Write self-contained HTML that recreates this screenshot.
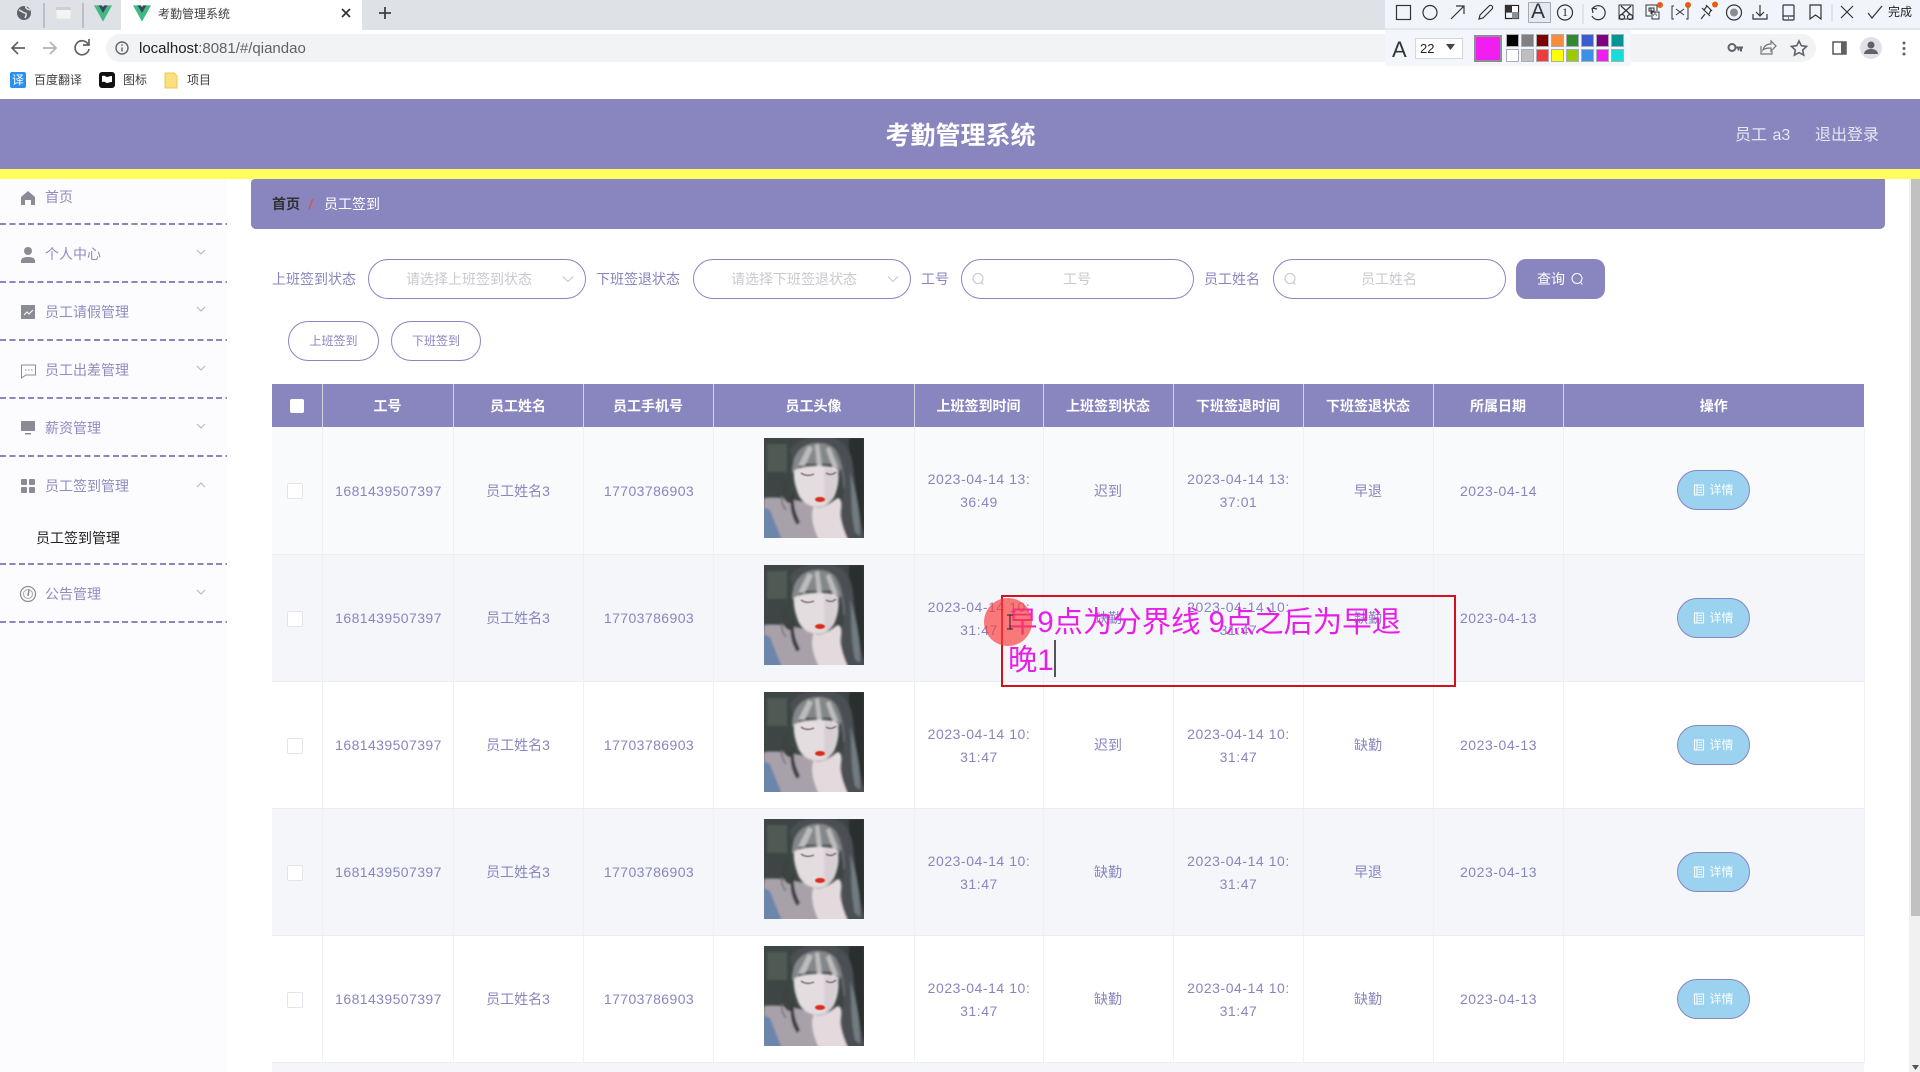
<!DOCTYPE html>
<html lang="zh-CN"><head><meta charset="utf-8"><title>考勤管理系统</title>
<style>
html,body{margin:0;padding:0;width:1920px;height:1072px;overflow:hidden;background:#fff}
body{position:relative;font-family:"Liberation Sans","Noto Sans CJK SC",sans-serif;font-size:14px;color:#8985bf}
.a{position:absolute;white-space:nowrap}
.m{position:absolute;left:45px;line-height:20px;color:#8f8cc0}
.d{position:absolute;left:0;width:227px;height:2px;background:repeating-linear-gradient(90deg,#8985bf 0 6px,transparent 6px 9.4px)}
.pill{position:absolute;top:259px;height:38px;border:1px solid #8985bf;border-radius:20px;background:#fff}
.ph{position:absolute;top:269px;line-height:20px;color:#c9c9cf;white-space:nowrap}
.lb{position:absolute;top:269px;line-height:20px;color:#8985bf;white-space:nowrap}
table{position:absolute;left:272px;top:384px;width:1592px;border-collapse:collapse;table-layout:fixed}
th{height:43px;padding:0;background:#8985bf;color:#fff;font-weight:700;border-right:1px solid #d4d3e8;font-size:14px;box-sizing:border-box}
th:last-child{border-right:none}
td{height:127px;padding:2px 0 0;text-align:center;vertical-align:middle;border-right:1px solid #eef0f5;border-bottom:1px solid #ebeef5;box-sizing:border-box;line-height:23px;color:#8985bf}
tr.r1 td{background:#f9fafc}
tr.r2 td{background:#f5f6fa}
tr.r3 td{background:#fff}
td.n{letter-spacing:.42px;padding-left:2px}
td.t{letter-spacing:.55px;padding-left:1px}
.cb{display:block;width:14px;height:14px;border:1px solid #e3e5ec;background:#fff;border-radius:2px;margin:0 0 0 15px}
.pic{display:block;width:100px;height:100px;margin:-7px auto 0}
.det{display:inline-block;position:relative;top:-1px;box-sizing:border-box;width:73px;height:40px;line-height:38px;border:1px solid #8985bf;border-radius:20px;background:#9bd2ef;color:#fff;font-size:12px;vertical-align:middle}
.det svg{vertical-align:-2px;margin-right:4px}
.sw{position:absolute;width:13px;height:13px;box-sizing:border-box;border:1px solid #a9adb5}
</style></head>
<body>
<svg width="0" height="0" style="position:absolute">
<defs>
<filter id="bl" x="-5%" y="-5%" width="110%" height="110%"><feGaussianBlur stdDeviation="1.1"/></filter>
<filter id="bs" x="-5%" y="-5%" width="110%" height="110%"><feGaussianBlur stdDeviation="0.5"/></filter>
<symbol id="girl" viewBox="0 0 100 100">
<rect width="100" height="100" fill="#3d4644"/>
<g filter="url(#bl)">
<rect x="3" y="6" width="20" height="28" fill="#505a55"/>
<rect x="85" y="0" width="15" height="100" fill="#2a2f2f"/>
<path d="M26 12C32 2 44-2 58-2c16 0 26 8 30 24 4 26 4 54 14 80H76L80 50 74 26H30z" fill="#4b5052"/>
<path d="M0 60C15 58 32 62 50 66L56 102H-2z" fill="#a9a1aa"/>
<path d="M-2 68L6 72 18 102H-2z" fill="#6c86ab"/>
<path d="M28 34C28 16 38 5 54 5c14 0 22 8 24 24l-4 6-6-9H36l-4 10z" fill="#84878a"/>
<path d="M34 28L44 8l5 2-8 18zM55 6l3 22-5 1-2-22zM66 9l8 20-5 2-7-20z" fill="#bdbcbb"/>
<path d="M30 33C36 27 64 26 73 31c3 7 1 19-3 28-4 6-8 9-14 10-10 0-17-4-21-11-3-7-6-17-5-25z" fill="#e4dde0"/>
<path d="M60 30c8 0 13 2 13 6 0 8-1 18-6 26-3 3-5 3-7 2z" fill="#d6d0d5"/>
<path d="M26 40C21 50 24 58 30 64 25 68 18 62 18 52c0-6 3-10 8-14z" fill="#3d4241"/>
<path d="M31 56c-3 10 1 20 5 28l-3 3C27 78 25 66 28 56z" fill="#3a3e3d"/>
<path d="M50 68C54 71 62 69 72 61c5-3 6 4 5 10-1 8 0 15 7 31H55C49 90 46 76 50 68z" fill="#e4dadd"/>
<path d="M86 34c2 18 0 38 5 60l5 4C97 78 92 52 86 34z" fill="#6f7b80"/>
<path d="M18 58c-1 6 1 10 4 14M72 14c6 10 8 22 8 36" stroke="#6a7072" stroke-width="1.500" fill="none"/>
</g>
<g filter="url(#bs)">
<path d="M37 35c4 3 9 3 13 1M62 35c3 2 7 2 10-1" stroke="#7b6d74" stroke-width="1.500" fill="none"/>
<ellipse cx="56" cy="61.500" rx="5" ry="2.500" fill="#db2a1e"/>
</g>
</symbol>
<symbol id="vue" viewBox="0 0 20 18"><path d="M0 0h7l3 5 3-5h7L10 18z" fill="#42b883"/><path d="M5 0h4l1 2 1-2h4l-5 8.5z" fill="#35495e"/></symbol>
<symbol id="doc" viewBox="0 0 12 12"><path d="M1.5 1h9v10h-9zM4 1v10M5.5 3.5h3.5M5.5 6h3.5M5.5 8.5h3.5" stroke="#fff" stroke-width="1.1" fill="none"/></symbol>
</defs>
</svg>

<!-- browser chrome -->
<div class="a" style="left:0;top:0;width:1920px;height:30px;background:#dee1e6"></div>
<div class="a" style="left:121px;top:0;width:241px;height:30px;background:#fff"></div>
<div class="a" style="left:106px;top:34px;width:1710px;height:28px;background:#f1f3f4;border-radius:14px"></div>
<svg class="a" style="left:0;top:0" width="420" height="98" viewBox="0 0 420 98">
<circle cx="24" cy="13" r="7" fill="#5f6368"/><path d="M19 10c3 1 4 3 6 3s1 3 0 5M26 6c-1 2 1 3 4 4" stroke="#dee1e6" stroke-width="1.6" fill="none"/>
<path d="M44 3v25M83 3v25" stroke="#9aa0a6"/>
<rect x="56" y="7" width="15" height="12" fill="#f4f4f4" stroke="#e2e2e2"/><rect x="56" y="7" width="15" height="3" fill="#cfcfcf"/>
<use href="#vue" x="94" y="5" width="18" height="17"/>
<use href="#vue" x="133" y="5" width="18" height="17"/>
<path d="M342 9l8 8M350 9l-8 8" stroke="#333" stroke-width="1.7"/>
<path d="M385 7v12M379 13h12" stroke="#3c4043" stroke-width="1.8"/>
<path d="M25 48H12M18 42l-6 6 6 6" stroke="#5f6368" stroke-width="1.7" fill="none"/>
<path d="M43 48h13M50 42l6 6-6 6" stroke="#b0b3b8" stroke-width="1.7" fill="none"/>
<path d="M88 44a7 7 0 1 0 1 5M89 39v6h-6" stroke="#5f6368" stroke-width="1.7" fill="none"/>
<circle cx="122" cy="48" r="6" fill="none" stroke="#5f6368" stroke-width="1.4"/><path d="M122 47.500v4M122 44.300v1.500" stroke="#5f6368" stroke-width="1.4"/>
<rect x="10" y="72" width="16" height="16" rx="2" fill="#2b8ff0"/>
<rect x="99" y="72" width="16" height="16" rx="3" fill="#111"/><path d="M102 76c3-1 4 1 5 1s3-1 5-1v6c-2 0-4 1-5 1s-2-2-5-1z" fill="#fff"/>
<path d="M165 73h9l3 3v12h-12z" fill="#fbdd83" stroke="#f1c84f"/>
</svg>
<div class="a" style="left:10px;top:72px;width:16px;line-height:16px;font-size:12px;color:#fff;text-align:center">译</div>
<div class="a" style="left:158px;top:4.500px;font-size:12px;line-height:18px;color:#3c4043">考勤管理系统</div>
<div class="a" style="left:139px;top:40px;font-size:15px;line-height:18px;color:#202124">localhost<span style="color:#5f6368">:8081/#/qiandao</span></div>
<div class="a" style="left:34px;top:71px;font-size:12px;line-height:18px;color:#3c4043">百度翻译</div>
<div class="a" style="left:123px;top:71px;font-size:12px;line-height:18px;color:#3c4043">图标</div>
<div class="a" style="left:187px;top:71px;font-size:12px;line-height:18px;color:#3c4043">项目</div>

<!-- right browser icons -->
<svg class="a" style="left:1720px;top:30px" width="200" height="40" viewBox="1720 30 200 40">
<circle cx="1732" cy="47.500" r="3.500" fill="none" stroke="#5f6368" stroke-width="2"/><path d="M1735 47.500h8M1741 47.500v4M1738.500 47.500v3" stroke="#5f6368" stroke-width="2"/>
<path d="M1761 46v8h11v-3M1763 50c1-4 4-6 8-6v-3l5 5-5 5v-3c-3 0-6 0-8 2z" fill="none" stroke="#73777c" stroke-width="1.2"/>
<path d="M1799 41l2.300 4.700 5.200.7-3.800 3.600 1 5.100-4.700-2.500-4.600 2.500.9-5.100-3.800-3.600 5.200-.7z" fill="none" stroke="#5f6368" stroke-width="1.6"/>
<rect x="1833" y="42" width="13" height="12" fill="#fff" stroke="#5f6368" stroke-width="1.6"/><rect x="1841" y="42" width="5" height="12" fill="#5f6368"/>
<circle cx="1871" cy="48" r="11" fill="#dee1e6"/><circle cx="1871" cy="45" r="3.500" fill="#5f6368"/><path d="M1864 54c0-3 3-5 7-5s7 2 7 5z" fill="#5f6368"/>
<circle cx="1904" cy="43" r="1.500" fill="#5f6368"/><circle cx="1904" cy="48.500" r="1.500" fill="#5f6368"/><circle cx="1904" cy="54" r="1.500" fill="#5f6368"/>
</svg>

<!-- screenshot toolbar -->
<div class="a" style="left:1385px;top:0;width:535px;height:28px;background:#f1f5fb;border-bottom:2px solid #e2e6ed"></div>
<div class="a" style="left:1385px;top:30px;width:246px;height:36px;background:#f3f6fb"></div>
<div class="a" style="left:1528px;top:2px;width:21px;height:19px;background:#e5e9f0;border:1px solid #a5a8ad;border-radius:1px"></div>
<svg class="a" style="left:1385px;top:0" width="535" height="30" viewBox="1385 0 535 30" fill="none" stroke="#333" stroke-width="1.2">
<rect x="1396.500" y="5.500" width="14" height="14"/>
<circle cx="1430" cy="12.500" r="7"/>
<path d="M1451 19l13-13M1456 6h8v8"/>
<path d="M1479 19l1-4 9-9a2 2 0 0 1 3 3l-9 9z"/>
<rect x="1505.500" y="5.500" width="13" height="13" stroke="#222"/><rect x="1505.500" y="5.500" width="6.500" height="6.500" fill="#333"/><rect x="1512" y="12" width="6.500" height="6.500" fill="#8d8f96" stroke="none"/><rect x="1512" y="6" width="6" height="6" fill="#fff" stroke="none"/>
<circle cx="1565" cy="12.500" r="7.500"/>
<path d="M1583 4v20" stroke="#d5d8de"/>
<path d="M1592 8l1 5M1592 8l5 1M1593 8a7 7 0 1 1-1 8"/>
<path d="M1619 5h14v14h-14z" stroke-width="1"/><path d="M1621 6l10 9M1631 6l-10 9"/><circle cx="1622" cy="17" r="2.500"/><circle cx="1630" cy="17" r="2.500"/>
<path d="M1651 16h-5V5h11v6M1649 8h5v3h-5zM1651 8v6" stroke-width="1"/><rect x="1652" y="12" width="7" height="7" stroke-width="1"/>
<path d="M1674 6h-2v13h2M1686 6h2v13h-2M1676 9l8 6M1684 9l-8 6" stroke-width="1"/>
<path d="M1701 19l4-5M1702 8l8 8M1706 5l6 6M1704 10l3-4M1709 14l2-4"/>
<circle cx="1734" cy="12.500" r="7.500"/><circle cx="1734" cy="12.500" r="4" fill="#8b8d93" stroke="none"/>
<path d="M1760 5v11M1756 12l4 4 4-4M1753 14v5h14v-5"/>
<rect x="1783" y="5" width="11" height="15" rx="1"/><path d="M1783 16h11M1788 18h1"/>
<path d="M1810 5h11v14l-5.500-4-5.500 4z"/>
<path d="M1832 4v18" stroke="#d5d8de"/>
<path d="M1841 6l12 12M1853 6l-12 12"/>
<path d="M1868 13l4 5 10-12"/>
<g stroke="none" fill="#ea5a14"><circle cx="1660" cy="5" r="3"/><circle cx="1688" cy="5" r="3"/><circle cx="1715" cy="4.500" r="3"/></g>
</svg>
<div class="a" style="left:1531px;top:1px;font-size:21px;line-height:22px;color:#333">A</div>
<div class="a" style="left:1562px;top:5px;font-family:'Liberation Serif',serif;font-size:12px;line-height:15px;color:#222">1</div>
<div class="a" style="left:1653px;top:10px;font-size:6px;line-height:10px;color:#333">A</div>
<div class="a" style="left:1888px;top:4px;font-size:12px;line-height:16px;color:#222">完成</div>
<div class="a" style="left:1392px;top:36px;font-size:22px;line-height:28px;color:#333">A</div>
<div class="a" style="left:1415px;top:38px;width:46px;height:19px;background:#fff;border:1px solid #d4d7dd;font-size:13px;line-height:19px;color:#222;text-indent:4px">22</div>
<svg class="a" style="left:1445px;top:42px" width="12" height="10"><path d="M1 2h9L5.500 8z" fill="#444"/></svg>
<div class="a" style="left:1474px;top:35px;width:28px;height:27px;background:#f01ef0;border:2px solid #8d8d93;box-sizing:border-box"></div>
<div class="sw" style="left:1506px;top:34px;background:#000"></div>
<div class="sw" style="left:1521px;top:34px;background:#808080"></div>
<div class="sw" style="left:1536px;top:34px;background:#7f0000"></div>
<div class="sw" style="left:1551px;top:34px;background:#f78c3c"></div>
<div class="sw" style="left:1566px;top:34px;background:#2f8a34"></div>
<div class="sw" style="left:1581px;top:34px;background:#3a5ccc"></div>
<div class="sw" style="left:1596px;top:34px;background:#800080"></div>
<div class="sw" style="left:1611px;top:34px;background:#009595"></div>
<div class="sw" style="left:1506px;top:49px;background:#fff"></div>
<div class="sw" style="left:1521px;top:49px;background:#bfbfbf"></div>
<div class="sw" style="left:1536px;top:49px;background:#f23a3a"></div>
<div class="sw" style="left:1551px;top:49px;background:#ffff00"></div>
<div class="sw" style="left:1566px;top:49px;background:#99cc00"></div>
<div class="sw" style="left:1581px;top:49px;background:#3a92e8"></div>
<div class="sw" style="left:1596px;top:49px;background:#f01ef0"></div>
<div class="sw" style="left:1611px;top:49px;background:#17dcdc"></div>

<!-- app header -->
<div class="a" style="left:0;top:99px;width:1920px;height:70px;background:#8985bf"></div>
<div class="a" style="left:0;top:169px;width:1920px;height:10px;background:#fffe5f"></div>
<div class="a" style="left:885.500px;top:118px;width:150px;font-size:25px;line-height:36px;font-weight:700;color:#fff">考勤管理系统</div>
<div class="a" style="left:1735px;top:124px;font-size:16px;line-height:24px;color:#e8e7f4;word-spacing:1px">员工 a3</div>
<div class="a" style="left:1815px;top:124px;font-size:16px;line-height:24px;color:#e8e7f4">退出登录</div>

<!-- sidebar -->
<div class="a" style="left:0;top:179px;width:227px;height:893px;background:#fcfcfe"></div>
<div class="m" style="top:187px">首页</div>
<div class="m" style="top:244px">个人中心</div>
<div class="m" style="top:302px">员工请假管理</div>
<div class="m" style="top:360px">员工出差管理</div>
<div class="m" style="top:418px">薪资管理</div>
<div class="m" style="top:476px">员工签到管理</div>
<div class="m" style="top:528px;left:36px;color:#222">员工签到管理</div>
<div class="m" style="top:584px">公告管理</div>
<div class="d" style="top:223px"></div>
<div class="d" style="top:281px"></div>
<div class="d" style="top:339px"></div>
<div class="d" style="top:397px"></div>
<div class="d" style="top:455px"></div>
<div class="d" style="top:563px"></div>
<div class="d" style="top:621px"></div>
<svg class="a" style="left:0;top:179px" width="227" height="450" viewBox="0 179 227 450">
<g fill="#8b8b96">
<path d="M28 191l7 6v8h-4v-5h-6v5h-4v-8z"/>
<circle cx="28" cy="251" r="4"/><path d="M21 261c0-3 3-4 7-4s7 1 7 4v2H21z"/>
<rect x="21" y="305" width="14" height="14"/>
<rect x="21" y="421" width="14" height="10"/><rect x="25" y="433" width="6" height="1.500"/>
<rect x="21" y="479" width="6" height="6" rx="1"/><rect x="29" y="479" width="6" height="6" rx="1"/><rect x="21" y="487" width="6" height="6" rx="1"/><rect x="29" y="487" width="6" height="6" rx="1"/>
</g>
<path d="M24 315l3-3 2 2 4-4" stroke="#fff" fill="none"/>
<path d="M21.500 365h14v10H26l-4.500 3z" fill="none" stroke="#8b8b96"/><path d="M25 370h1.500M28 370h1.500M31 370h1.500" stroke="#8b8b96"/>
<circle cx="28" cy="594" r="7.500" fill="none" stroke="#8b8b96" stroke-width="1.200"/><circle cx="28" cy="594" r="4.500" fill="none" stroke="#a5a5ad"/><path d="M29 590l-1 6" stroke="#8b8b96" stroke-width="1.500"/>
<g fill="none" stroke="#b5b5bd" stroke-width="1">
<path d="M197 250l4 4 4-4M197 307l4 4 4-4M197 366l4 4 4-4M197 424l4 4 4-4M197 590l4 4 4-4"/>
<path d="M197 487l4-4 4 4"/>
</g>
</svg>

<!-- breadcrumb -->
<div class="a" style="left:251px;top:179px;width:1634px;height:50px;background:#8985bf;border-radius:0 0 5px 5px;border-top-left-radius:4px"></div>
<div class="a" style="left:272px;top:194px;line-height:20px;font-weight:700;color:#303133">首页</div>
<div class="a" style="left:309px;top:194px;line-height:20px;font-weight:700;color:#e2504f;transform:skewX(-8deg)">/</div>
<div class="a" style="left:324px;top:194px;line-height:20px;color:#fff">员工签到</div>

<!-- filters -->
<div class="lb" style="left:272px">上班签到状态</div>
<div class="pill" style="left:368px;width:216px"></div>
<div class="ph" style="left:406px">请选择上班签到状态</div>
<div class="lb" style="left:596px">下班签退状态</div>
<div class="pill" style="left:692.500px;width:216px"></div>
<div class="ph" style="left:731px">请选择下班签退状态</div>
<div class="lb" style="left:921px">工号</div>
<div class="pill" style="left:961px;width:231px"></div>
<div class="ph" style="left:1063px">工号</div>
<div class="lb" style="left:1204px">员工姓名</div>
<div class="pill" style="left:1273px;width:231px"></div>
<div class="ph" style="left:1361px">员工姓名</div>
<div class="a" style="left:1516px;top:259px;width:89px;height:40px;background:#8985bf;border-radius:10px"></div>
<div class="a" style="left:1537px;top:269px;line-height:20px;color:#fff">查询</div>
<svg class="a" style="left:0;top:0;pointer-events:none" width="1700" height="310" viewBox="0 0 1700 310" fill="none">
<path d="M563 276.500l5 5 5-5M888 276.500l5 5 5-5" stroke="#c4c4cb"/>
<circle cx="978" cy="278.500" r="5" stroke="#c4c4cb"/><path d="M981.500 282.500l2 2" stroke="#c4c4cb"/>
<circle cx="1290" cy="278.500" r="5" stroke="#c4c4cb"/><path d="M1293.500 282.500l2 2" stroke="#c4c4cb"/>
<circle cx="1577" cy="278.500" r="5" stroke="#fff"/><path d="M1580.500 282.500l2 2" stroke="#fff"/>
</svg>
<div class="a" style="left:288px;top:321px;width:91px;height:40px;box-sizing:border-box;border:1px solid #8985bf;border-radius:20px;text-align:center;line-height:38px;font-size:12px">上班签到</div>
<div class="a" style="left:391px;top:321px;width:90px;height:40px;box-sizing:border-box;border:1px solid #8985bf;border-radius:20px;text-align:center;line-height:38px;font-size:12px">下班签到</div>

<!-- table -->
<div class="a" style="left:272px;top:1062px;width:1592px;height:10px;background:#f5f6fa"></div>
<table>
<colgroup><col style="width:50px"><col style="width:131px"><col style="width:130px"><col style="width:130px"><col style="width:201px"><col style="width:129px"><col style="width:130px"><col style="width:130px"><col style="width:130px"><col style="width:130px"><col style="width:301px"></colgroup>
<thead><tr><th><span style="display:block;width:14px;height:14px;background:#fff;border-radius:2px;margin-left:18px"></span></th><th>工号</th><th>员工姓名</th><th>员工手机号</th><th>员工头像</th><th>上班签到时间</th><th>上班签到状态</th><th>下班签退时间</th><th>下班签退状态</th><th>所属日期</th><th>操作</th></tr></thead>
<tbody>
<tr class="r1"><td><span class="cb"></span></td><td class="n">1681439507397</td><td>员工姓名3</td><td class="n">17703786903</td><td><svg class="pic"><use href="#girl" width="100" height="100"/></svg></td><td class="t">2023-04-14 13:<br>36:49</td><td>迟到</td><td class="t">2023-04-14 13:<br>37:01</td><td>早退</td><td class="t">2023-04-14</td><td><span class="det"><svg width="12" height="12"><use href="#doc" width="12" height="12"/></svg>详情</span></td></tr>
<tr class="r2"><td><span class="cb"></span></td><td class="n">1681439507397</td><td>员工姓名3</td><td class="n">17703786903</td><td><svg class="pic"><use href="#girl" width="100" height="100"/></svg></td><td class="t">2023-04-14 10:<br>31:47</td><td>缺勤</td><td class="t">2023-04-14 10:<br>31:47</td><td>缺勤</td><td class="t">2023-04-13</td><td><span class="det"><svg width="12" height="12"><use href="#doc" width="12" height="12"/></svg>详情</span></td></tr>
<tr class="r3"><td><span class="cb"></span></td><td class="n">1681439507397</td><td>员工姓名3</td><td class="n">17703786903</td><td><svg class="pic"><use href="#girl" width="100" height="100"/></svg></td><td class="t">2023-04-14 10:<br>31:47</td><td>迟到</td><td class="t">2023-04-14 10:<br>31:47</td><td>缺勤</td><td class="t">2023-04-13</td><td><span class="det"><svg width="12" height="12"><use href="#doc" width="12" height="12"/></svg>详情</span></td></tr>
<tr class="r2"><td><span class="cb"></span></td><td class="n">1681439507397</td><td>员工姓名3</td><td class="n">17703786903</td><td><svg class="pic"><use href="#girl" width="100" height="100"/></svg></td><td class="t">2023-04-14 10:<br>31:47</td><td>缺勤</td><td class="t">2023-04-14 10:<br>31:47</td><td>早退</td><td class="t">2023-04-13</td><td><span class="det"><svg width="12" height="12"><use href="#doc" width="12" height="12"/></svg>详情</span></td></tr>
<tr class="r3"><td><span class="cb"></span></td><td class="n">1681439507397</td><td>员工姓名3</td><td class="n">17703786903</td><td><svg class="pic"><use href="#girl" width="100" height="100"/></svg></td><td class="t">2023-04-14 10:<br>31:47</td><td>缺勤</td><td class="t">2023-04-14 10:<br>31:47</td><td>缺勤</td><td class="t">2023-04-13</td><td><span class="det"><svg width="12" height="12"><use href="#doc" width="12" height="12"/></svg>详情</span></td></tr>
</tbody></table>

<!-- scrollbar -->
<div class="a" style="left:1909px;top:179px;width:11px;height:893px;background:#f1f1f1"></div>
<div class="a" style="left:1911px;top:179px;width:9px;height:737px;background:#c1c1c1"></div>
<svg class="a" style="left:1911px;top:1063px" width="9" height="9"><path d="M1 2h7L4.500 7z" fill="#555"/></svg>

<!-- annotation -->
<div class="a" style="left:1001px;top:595px;width:455px;height:92px;box-sizing:border-box;border:2px solid #d3121d"></div>
<div class="a" style="left:1008px;top:604px;font-size:29.350px;line-height:38px;color:#e81ee8">早9点为分界线 9点之后为早退<br>晚1</div>
<div class="a" style="left:1054px;top:640px;width:2px;height:37px;background:#555"></div>
<div class="a" style="left:984px;top:598px;width:48px;height:48px;border-radius:50%;background:rgba(250,60,60,.68)"></div>
<svg class="a" style="left:1005px;top:614px" width="10" height="16"><path d="M2 1h6M5 1v14M2 15h6" stroke="#222" fill="none"/></svg>
</body></html>
